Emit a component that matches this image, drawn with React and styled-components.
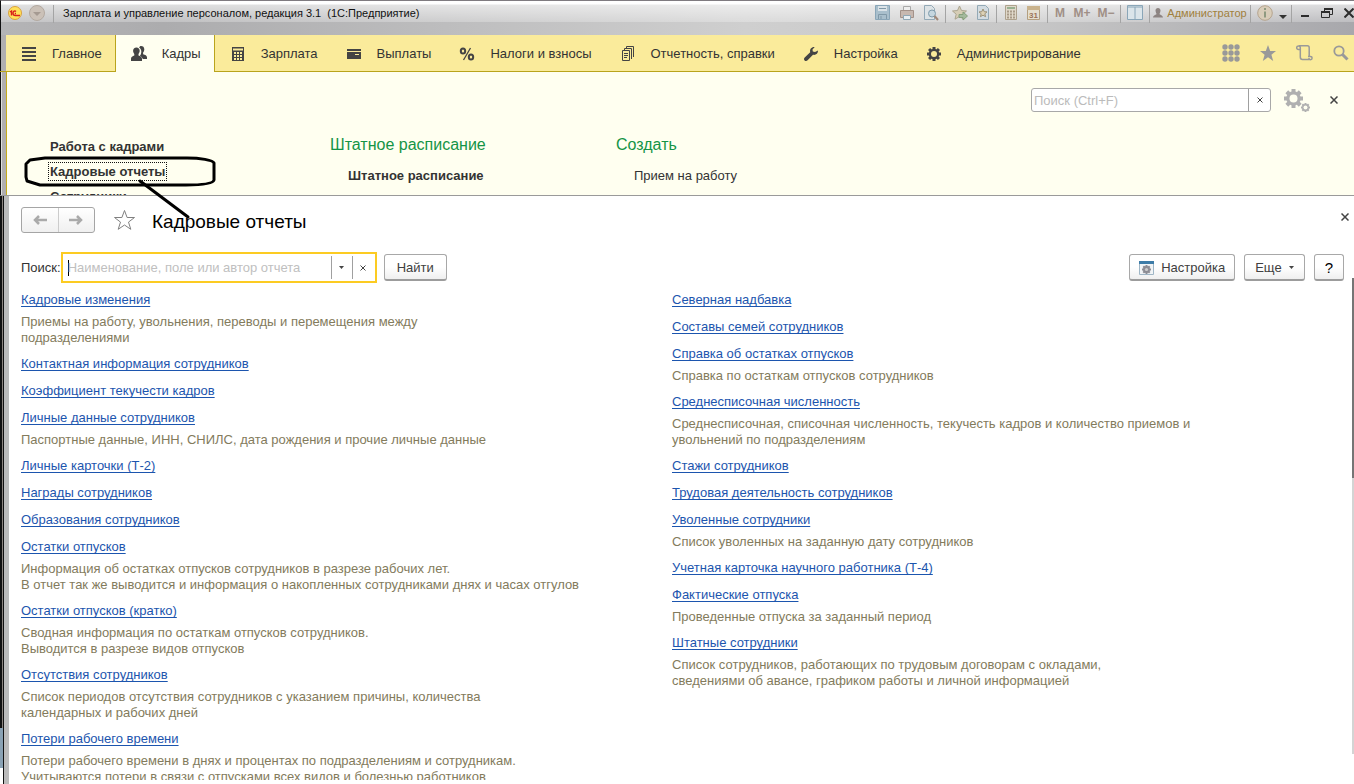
import React from "react";
import styled, { createGlobalStyle, css } from "styled-components";

const GlobalStyle = createGlobalStyle`
  * {
    box-sizing: border-box;
  }

  body {
    margin: 0;
    background: #fff;
    color: #333;
    font-family: "Liberation Sans", Arial, sans-serif;
    font-size: 13px;
    line-height: 16px;
  }

  button,
  input {
    font: inherit;
    color: inherit;
  }
`;

const Window = styled.div`
  position: relative;
  display: flex;
  flex-direction: column;
  height: 100vh;
  overflow: hidden;
`;

/* Title bar */

const TitleBar = styled.header`
  display: flex;
  align-items: flex-start;
  height: 35px;
  padding: 4px 0 0 7px;
  border-top: 1px solid #7f7b80;
  border-left: 1px solid #111;
  background: linear-gradient(
      to bottom,
      #fff 0,
      #fff 3px,
      rgba(255, 255, 255, 0.6) 4px,
      rgba(255, 255, 255, 0.25) 21px,
      transparent 21px
    ),
    linear-gradient(to right, #b4b4b6, #acacae 12%, #cfcfcf 55%, #c8c8c8 75%, #a8a8ac);
`;

const TitleText = styled.h1`
  flex: 1;
  margin: 0;
  padding-left: 7px;
  color: #111;
  font-size: 11px;
  font-weight: normal;
  line-height: 17px;
  white-space: pre;
`;

const TitleButton = styled.button`
  display: flex;
  align-items: center;
  justify-content: ${({ $end }) => ($end ? "flex-end" : "center")};
  flex: none;
  width: ${({ $width }) => $width || 24}px;
  height: 16px;
  padding: 0;
  border: 0;
  background: none;
  color: #a08f86;
  font-size: 12px;
  font-weight: bold;
  white-space: nowrap;
`;

const UserButton = styled(TitleButton)`
  gap: 4px;
  color: #a0803c;
  font-size: 11px;
  font-weight: normal;
`;

const Separator = styled.span`
  flex: none;
  width: 1px;
  height: 18px;
  margin: 0 2px;
  background: #a4a4a4;
`;

/* Sections */

const Sections = styled.nav`
  display: flex;
  height: 37px;
  flex: none;
  padding-left: 6px;
  border-bottom: 1px solid #b9a41c;
  background: linear-gradient(to right, #111 1px, #b0aeb0 1px, #b0aeb0 6px, #faeb9b 6px);
`;

const Section = styled.button`
  display: flex;
  align-items: center;
  gap: 15px;
  padding: 2px 13px 0 15px;
  border: 0;
  background: none;
  font-size: 13px;
  white-space: nowrap;

  ${({ $edge }) =>
    $edge &&
    css`
      border-right: 1px solid #b9a41c;
    `}

  ${({ $active }) =>
    $active &&
    css`
      margin-bottom: -1px;
      padding-top: 1px;
      background: #fffff0;
    `}
`;

const SectionTools = styled.div`
  display: flex;
  align-items: center;
  gap: 19px;
  margin-left: auto;
  padding-right: 5px;
`;

const IconButton = styled.button`
  display: flex;
  align-items: center;
  justify-content: center;
  flex: none;
  min-width: 16px;
  height: 18px;
  margin-left: ${({ $space }) => $space || 0}px;
  padding: 0;
  border: 0;
  background: none;
`;

/* Section menu */

const Menu = styled.section`
  flex: none;
  height: 124px;
  padding-left: 6px;
  overflow: hidden;
  border-bottom: 1px solid #9a9a9a;
  background: linear-gradient(
    to right,
    #111 1px,
    #ddd 1px,
    #ddd 2px,
    #b0aeb0 2px,
    #b0aeb0 6px,
    #c6ab1c 6px,
    #c6ab1c 7px,
    #fffff0 7px
  );
`;

const MenuTools = styled.div`
  display: flex;
  align-items: center;
  justify-content: flex-end;
  padding: 16px 12px 0 0;
`;

const MenuSearch = styled.div`
  display: flex;
  width: 240px;
  height: 24px;
  overflow: hidden;
  border: 1px solid #a8a8a8;
  border-radius: 3px;
  background: #fff;

  input {
    flex: 1;
    min-width: 0;
    padding: 1px 2px 0;
    border: 0;
    outline: 0;
    background: none;
  }

  input::placeholder {
    color: #bbb;
  }

  button {
    width: 22px;
    height: 100%;
    border-left: 1px solid #a0a0a0;
  }
`;

const MenuColumns = styled.div`
  display: grid;
  grid-template-columns: 280px 286px 1fr;
  padding: 22px 0 0 44px;
`;

const MenuColumn = styled.ul`
  margin: 0;
  padding: 0;
  list-style: none;
`;

const MenuHeading = styled.h2`
  margin: 0;
  padding: 1px 0 7px;
  color: #149446;
  font-size: 16px;
  font-weight: normal;
  line-height: 20px;
`;

const MenuItem = styled.li`
  height: 25px;
  padding: ${({ $nested }) => ($nested ? "6px 0 0 18px" : "5px 0 0")};

  a {
    color: #333;
    font-weight: ${({ $bold }) => ($bold ? "bold" : "normal")};
    text-decoration: none;
    outline: ${({ $focused }) => ($focused ? "1px dotted #111" : "none")};
    outline-offset: 1px;
  }
`;

/* Page */

const Page = styled.main`
  display: flex;
  flex: 1;
  flex-direction: column;
  min-height: 0;
  padding: 11px 10px 4px 21px;
  background:
    linear-gradient(#8aa2b4 40px, #fff 40px) left bottom / 3px 56px no-repeat,
    linear-gradient(
      to right,
      #111 2px,
      #8c8580 2px,
      #8c8580 3px,
      #111 3px,
      #111 4px,
      #bbb 4px,
      #bbb 9px,
      #fff 9px
    );
`;

const PageHeader = styled.div`
  display: flex;
  align-items: center;
  height: 26px;
  margin-right: -9px;
`;

const History = styled.div`
  display: flex;
  width: 74px;
  height: 26px;
  border: 1px solid #a5a5a5;
  border-radius: 3px;
  background: linear-gradient(#fff, #f0f0f0);

  button {
    flex: 1;
    height: 100%;
  }

  button + button {
    border-left: 1px solid #ccc;
  }
`;

const PageTitle = styled.h2`
  flex: 1;
  margin: 3px 0 0 16px;
  color: #000;
  font-size: 19px;
  font-weight: normal;
  line-height: 22px;
`;

const CloseButton = styled(IconButton)`
  align-self: flex-start;
  height: 20px;
`;

const Toolbar = styled.div`
  display: flex;
  align-items: center;
  flex: none;
  height: 31px;
  margin-top: 19px;
`;

const SearchBox = styled.div`
  display: flex;
  align-items: center;
  width: 316px;
  height: 31px;
  margin-right: 7px;
  padding-right: 2px;
  border: 2px solid #fccb22;

  input {
    flex: 1;
    min-width: 0;
    padding: 0 5px;
    border: 0;
    outline: 0;
    background: none;
  }

  input::placeholder {
    color: #c0c0c0;
  }

  button {
    width: 21px;
    height: 23px;
    border-left: 1px solid #a0a0a0;
  }
`;

const Caret = styled.span`
  width: 1px;
  height: 16px;
  margin: 0 -6px 0 5px;
  background: #000;
`;

const Button = styled.button`
  display: flex;
  align-items: center;
  justify-content: center;
  gap: 7px;
  height: 27px;
  padding: 1px ${({ $pad }) => $pad || 12}px 0;
  border: 1px solid #a8a8a8;
  border-bottom: 2px solid #9c9c9c;
  border-radius: 3px;
  background: linear-gradient(#fff 50%, #efefef);
  color: ${({ $dark }) => ($dark ? "#000" : "#404040")};
  white-space: nowrap;
`;

const HelpButton = styled(Button)`
  font-size: 15px;
`;

const Actions = styled.div`
  display: flex;
  gap: 9px;
  margin-left: auto;
`;

const Reports = styled.div`
  display: grid;
  grid-template-columns: 1fr 1fr;
  flex: 1;
  min-height: 0;
  padding: 8px 21px 0 0;
  overflow: hidden;
`;

const ReportItem = styled.article`
  padding-bottom: 10px;

  a {
    display: block;
    width: max-content;
    color: #1c55ae;
    line-height: 17px;
    text-decoration: underline;
    text-decoration-skip-ink: none;
    text-underline-offset: 2px;
  }

  p {
    margin: 6px 0 -1px;
    color: #837b5c;
    white-space: pre-line;
  }
`;

/* Lies over the right edge of the page */
const ScrollTrack = styled.div`
  position: absolute;
  top: 278px;
  right: 0;
  bottom: 30px;
  width: 2px;
  background: linear-gradient(#757575 42%, #d4d4d4 42%);
`;

/* Hand-drawn mark over the menu and the page title */
const Mark = styled.svg`
  position: absolute;
  top: 152px;
  left: 20px;
  pointer-events: none;
`;

function Icon({ w = 16, h = 16, children, ...rest }) {
  return (
    <svg
      width={w}
      height={h}
      viewBox={`0 0 ${w} ${h}`}
      fill="none"
      aria-hidden="true"
      {...rest}
    >
      {children}
    </svg>
  );
}

// Cog around (c, c), the hole takes the colour of what lies behind
function Cog({ c, r, hole, tooth, color, back }) {
  return (
    <g>
      {[0, 45, 90, 135].map((angle) => (
        <rect
          key={angle}
          x={c - tooth / 2}
          y={c - r}
          width={tooth}
          height={r * 2}
          fill={color}
          transform={`rotate(${angle} ${c} ${c})`}
        />
      ))}
      <circle cx={c} cy={c} r={r * 0.76} fill={color} />
      <circle cx={c} cy={c} r={hole} fill={back} />
    </g>
  );
}

function Cross({ size = 7, width = 1, color = "#444" }) {
  return (
    <Icon w={size} h={size}>
      <path
        d={`M.5 .5L${size - 0.5} ${size - 0.5}M${size - 0.5} .5L.5 ${size - 0.5}`}
        stroke={color}
        strokeWidth={width}
      />
    </Icon>
  );
}

function Down() {
  return (
    <Icon w={5} h={3}>
      <path d="M0 0h5L2.5 3z" fill="#444" />
    </Icon>
  );
}

const sectionIcons = {
  main: <path d="M1 2h14M1 6h14M1 10h14M1 14h14" stroke="#444" strokeWidth="2" />,
  people: (
    <g fill="#444">
      <path d="M10 0c2 0 3.300 1.200 3.300 3.300 0 1.500-.6 2.600-1.200 3.300v1.600c2 .5 3.900 1.300 3.900 3.100V13h-4.200c-.5-1.700-1.700-2.500-3-3 1-1.200 1.500-2.700 1.500-4.400 0-1.700-.8-3.200-2.200-4C8.600.6 9 0 10 0z" />
      <path d="M5.400 1.500c2 0 3.300 1.300 3.300 3.300 0 1.400-.6 2.500-1.200 3.200v1.500c1.800.6 3.500 1.500 3.500 3.300V15H0v-2.200c0-1.800 1.600-2.700 3.300-3.300V8C2.700 7.300 2.100 6.200 2.100 4.800c0-2 1.300-3.300 3.300-3.300z" />
    </g>
  ),
  calc: (
    <g>
      <path d="M2 1h12v14H2z" fill="#444" />
      <path d="M3 2.500h10v2H3z" fill="#faeb9b" />
      <path d="M4 6h2v2H4zM7 6h2v2H7zM10 6h2v2h-2zM4 9h2v2H4zM7 9h2v2H7zM10 9h2v2h-2zM4 12h2v2H4zM7 12h2v2H7zM10 12h2v2h-2z" fill="#faeb9b" />
    </g>
  ),
  wallet: (
    <g>
      <path d="M1 3h14v2H1zM1 6h14v7H1z" fill="#444" />
      <path d="M9 8.500h4" stroke="#faeb9b" />
    </g>
  ),
  percent: (
    <g stroke="#444" strokeWidth="2">
      <ellipse cx="4" cy="5" rx="2.200" ry="2.600" />
      <ellipse cx="12" cy="11" rx="2.200" ry="2.600" />
      <path d="M11.500 2L4.500 14" strokeWidth="1.300" />
    </g>
  ),
  reports: (
    <g stroke="#444">
      <path d="M2.500 4.500h7v10h-7zM4.500 4V2.500h7V13M6.500 2V.5h7V11M4 7.500h4M4 9.500h4M4 11.500h3" />
    </g>
  ),
  wrench: (
    <path
      d="M15 4.500c.2 3-2.300 5-5 4.300L4.600 14.300c-.9.900-2.200.9-3 .1s-.8-2.100.1-3L7.200 6.200C6.500 3.300 8.500.8 11.700 1.100L9.500 3.600l.3 2 2.200.5z"
      fill="#444"
    />
  ),
  cog: <Cog c={8} r={7} hole={3} tooth={3} color="#444" back="#faeb9b" />,
};

const sections = [
  { name: "Главное", icon: "main", edge: true },
  { name: "Кадры", icon: "people", edge: true, active: true },
  { name: "Зарплата", icon: "calc" },
  { name: "Выплаты", icon: "wallet" },
  { name: "Налоги и взносы", icon: "percent" },
  { name: "Отчетность, справки", icon: "reports" },
  { name: "Настройка", icon: "wrench" },
  { name: "Администрирование", icon: "cog" },
];

const leftReports = [
  {
    name: "Кадровые изменения",
    text: "Приемы на работу, увольнения, переводы и перемещения между\nподразделениями",
  },
  { name: "Контактная информация сотрудников" },
  { name: "Коэффициент текучести кадров" },
  {
    name: "Личные данные сотрудников",
    text: "Паспортные данные, ИНН, СНИЛС, дата рождения и прочие личные данные",
  },
  { name: "Личные карточки (Т-2)" },
  { name: "Награды сотрудников" },
  { name: "Образования сотрудников" },
  {
    name: "Остатки отпусков",
    text: "Информация об остатках отпусков сотрудников в разрезе рабочих лет.\nВ отчет так же выводится и информация о накопленных сотрудниками днях и часах отгулов",
  },
  {
    name: "Остатки отпусков (кратко)",
    text: "Сводная информация по остаткам отпусков сотрудников.\nВыводится в разрезе видов отпусков",
  },
  {
    name: "Отсутствия сотрудников",
    text: "Список периодов отсутствия сотрудников с указанием причины, количества\nкалендарных и рабочих дней",
  },
  {
    name: "Потери рабочего времени",
    text: "Потери рабочего времени в днях и процентах по подразделениям и сотрудникам.\nУчитываются потери в связи с отпусками всех видов и болезнью работников",
  },
];

const rightReports = [
  { name: "Северная надбавка" },
  { name: "Составы семей сотрудников" },
  {
    name: "Справка об остатках отпусков",
    text: "Справка по остаткам отпусков сотрудников",
  },
  {
    name: "Среднесписочная численность",
    text: "Среднесписочная, списочная численность, текучесть кадров и количество приемов и\nувольнений по подразделениям",
  },
  { name: "Стажи сотрудников" },
  { name: "Трудовая деятельность сотрудников" },
  {
    name: "Уволенные сотрудники",
    text: "Список уволенных на заданную дату сотрудников",
  },
  { name: "Учетная карточка научного работника (Т-4)" },
  {
    name: "Фактические отпуска",
    text: "Проведенные отпуска за заданный период",
  },
  {
    name: "Штатные сотрудники",
    text: "Список сотрудников, работающих по трудовым договорам с окладами,\nсведениями об авансе, графиком работы и личной информацией",
  },
];

function WindowTitle() {
  return (
    <TitleBar>
      <TitleButton $width={14} aria-label="1С">
        <Icon w={14} h={14}>
          <circle cx="7" cy="7" r="6.500" fill="#ffe15a" stroke="#d8a040" />
          <path d="M2 6l1.500-1v4.500M8 5.500C6.800 4.400 5 5.300 5 7.200c0 1.500 1 2.300 2.500 2.300H12M8 7.500H6.800" stroke="#d8201c" strokeWidth="1.400" />
        </Icon>
      </TitleButton>
      <TitleButton $width={29} aria-label="Главное меню">
        <Icon>
          <circle cx="8" cy="8" r="7.500" fill="#cbc1b8" stroke="#b3a9a0" />
          <path d="M4 7h8l-4 4z" fill="#a59a92" />
        </Icon>
      </TitleButton>
      <Separator />
      <TitleText>{"Зарплата и управление персоналом, редакция 3.1  (1С:Предприятие)"}</TitleText>

      <TitleButton aria-label="Сохранить">
        <Icon>
          <path d="M.5.5h14v14H.5z" fill="#a9bfcc" stroke="#8aa6b8" />
          <path d="M3 1h9v5H3z" fill="#dbe3e8" />
          <path d="M4 3.500h7M3.500 14V9.500h8V14M6 11v3" stroke="#8199a8" />
        </Icon>
      </TitleButton>
      <TitleButton aria-label="Печать">
        <Icon>
          <path d="M4.500 6V1.500h7V6" fill="#eee" stroke="#a9a9a9" />
          <path d="M1.500 5.500h13v7h-13z" fill="#c7b8b0" stroke="#a3928a" />
          <path d="M4.500 10.500h7v4h-7z" fill="#e8eef2" stroke="#8fa7b5" />
        </Icon>
      </TitleButton>
      <TitleButton aria-label="Просмотр">
        <Icon>
          <path d="M1.500.5h7l3 3v11h-10z" fill="#dde3e6" stroke="#93a9b6" />
          <circle cx="9" cy="8.500" r="3.500" fill="#c5d6df" stroke="#7f9bab" />
          <path d="M11.500 11l3.500 4" stroke="#a08878" strokeWidth="2" />
        </Icon>
      </TitleButton>
      <Separator />
      <TitleButton $width={23} aria-label="В избранное">
        <Icon>
          <path d="M7.500 1l2 4.500 5 .5-3.800 3.200 1.200 5-4.400-2.700L3 14.200l1.200-5L.5 6l5-.5z" fill="#d6cdb5" stroke="#aca58f" />
          <path d="M7 9.500h4V7l4.500 4-4.500 4v-2.500H7z" fill="#a4b99c" stroke="#86a17c" />
        </Icon>
      </TitleButton>
      <TitleButton $width={23} aria-label="Избранное">
        <Icon>
          <path d="M2.500.5h8l3 3v11h-11z" fill="#d3dce2" stroke="#93a9b6" />
          <path d="M8 4l1.200 2.700 2.800.2-2.200 1.900.8 2.900L8 10.200l-2.600 1.500.8-2.900L4 6.900l2.800-.2z" fill="#ddd1b5" stroke="#9c9278" />
        </Icon>
      </TitleButton>
      <Separator />
      <TitleButton $width={23} aria-label="Калькулятор">
        <Icon>
          <path d="M2.500.5h11v14h-11z" fill="#e0d9cb" stroke="#aea28e" />
          <path d="M4 2h8v2H4z" fill="#98b090" />
          <path d="M4 6.500h8M4 9.500h8M4 12.500h8" stroke="#a89a88" strokeWidth="2" strokeDasharray="2 1" />
        </Icon>
      </TitleButton>
      <TitleButton $width={23} aria-label="Календарь">
        <Icon>
          <path d="M1.500 2.500h12v12h-12z" fill="#e5dfcf" stroke="#b39f80" />
          <path d="M1 1h13v4H1z" fill="#c9b28c" />
          <text x="3" y="13" fontSize="8" fill="#9a7358" fontWeight="bold">31</text>
        </Icon>
      </TitleButton>
      <Separator />
      <TitleButton $width={20}>M</TitleButton>
      <TitleButton $width={24}>M+</TitleButton>
      <TitleButton $width={24}>M−</TitleButton>
      <Separator />
      <TitleButton aria-label="Окна">
        <Icon>
          <path d="M.5.500h15v14H.5z" fill="#dbe5ea" stroke="#8aa6b8" />
          <path d="M0 2h16M8 2v12" stroke="#8aa6b8" />
        </Icon>
      </TitleButton>
      <Separator />
      <UserButton $width={96}>
        <Icon w={10} h={10}>
          <path d="M5 0c1.500 0 2.500 1 2.500 2.500C7.500 4 6.500 5.500 6.500 6c0 .7 3 .8 3.500 3.500H0C.5 6.800 3.500 6.700 3.500 6c0-.5-1-2-1-3.500C2.500 1 3.500 0 5 0z" fill="#8d8482" />
        </Icon>
        Администратор
      </UserButton>
      <Separator />
      <TitleButton aria-label="О программе">
        <Icon>
          <circle cx="8" cy="8" r="7.300" fill="#d9cdb9" stroke="#b5a48e" />
          <path d="M8 3v2M8 6.500v6" stroke="#8f9a80" strokeWidth="2" />
        </Icon>
      </TitleButton>
      <TitleButton $width={12} aria-label="Сервис">
        <Icon w={8} h={12}>
          <path d="M0 8h8l-4 4z" fill="#333" />
        </Icon>
      </TitleButton>
      <Separator />
      <TitleButton $width={22} aria-label="Свернуть">
        <Icon w={8} h={8}>
          <path d="M0 7h8" stroke="#2d2d2d" strokeWidth="2" />
        </Icon>
      </TitleButton>
      <TitleButton $width={22} aria-label="Развернуть">
        <Icon w={12} h={10}>
          <path d="M3.500 3V.5h8v6H9" stroke="#2d2d2d" />
          <path d="M3 1h9M0 4h9" stroke="#2d2d2d" strokeWidth="2" />
          <path d="M.5 3.500h8v6h-8z" stroke="#2d2d2d" />
        </Icon>
      </TitleButton>
      <TitleButton $width={16} $end aria-label="Закрыть">
        <Cross size={10} width={2} color="#2d2d2d" />
      </TitleButton>
    </TitleBar>
  );
}

function ReportList({ items }) {
  return (
    <div>
      {items.map(({ name, text }) => (
        <ReportItem key={name}>
          <a href="#report">{name}</a>
          {text && <p>{text}</p>}
        </ReportItem>
      ))}
    </div>
  );
}

function App() {
  return (
    <Window>
      <GlobalStyle />
      <WindowTitle />

      <Sections>
        {sections.map(({ name, icon, edge, active }) => (
          <Section key={name} $edge={edge} $active={active}>
            <Icon>{sectionIcons[icon]}</Icon>
            {name}
          </Section>
        ))}
        <SectionTools>
          <IconButton aria-label="Все функции">
            <Icon w={18} h={18}>
              {[3, 9, 15].map((y) =>
                [3, 9, 15].map((x) => (
                  <circle key={`${x}-${y}`} cx={x} cy={y} r="2.700" fill="#999" />
                ))
              )}
            </Icon>
          </IconButton>
          <IconButton aria-label="Избранное">
            <Icon w={18} h={18}>
              <path d="M9 1l2.200 6H17l-4.600 3.700L14.200 17 9 13.200 3.800 17l1.800-6.300L1 7h5.800z" fill="#999" />
            </Icon>
          </IconButton>
          <IconButton aria-label="История">
            <Icon w={18} h={18}>
              <path d="M4 5.500H2.500a1.800 1.800 0 1 1 1.800-1.800V13c0 1.800 1 2.500 2.200 2.500H14M2.500 1.800h9c1.200 0 1.700.8 1.700 2V12M12 12.500h2.500a1.600 1.600 0 1 1-1.600 1.600" stroke="#999" strokeWidth="1.500" />
            </Icon>
          </IconButton>
          <IconButton aria-label="Поиск">
            <Icon>
              <circle cx="6" cy="6" r="4.700" stroke="#999" strokeWidth="1.800" />
              <path d="M9.500 9.500l5 5" stroke="#999" strokeWidth="3" />
            </Icon>
          </IconButton>
        </SectionTools>
      </Sections>

      <Menu>
        <MenuTools>
          <MenuSearch>
            <input type="search" placeholder="Поиск (Ctrl+F)" aria-label="Поиск (Ctrl+F)" />
            <IconButton aria-label="Очистить">
              <Cross size={6} />
            </IconButton>
          </MenuSearch>
          <IconButton $space={13} aria-label="Настройка меню">
            <Icon w={26} h={23}>
              <Cog c={9.5} r={9.5} hole={4} tooth={4} color="#b0b0b0" back="#fffff0" />
              <g transform="translate(17 14)">
                <Cog c={4.5} r={4.5} hole={2} tooth={2} color="#b0b0b0" back="#fffff0" />
              </g>
            </Icon>
          </IconButton>
          <IconButton $space={16} aria-label="Закрыть меню">
            <Cross size={8} width={1.5} />
          </IconButton>
        </MenuTools>
        <MenuColumns>
          <MenuColumn>
            <MenuItem $bold>
              <a href="#work">Работа с кадрами</a>
            </MenuItem>
            <MenuItem $bold $focused>
              <a href="#reports">Кадровые отчеты</a>
            </MenuItem>
            <MenuItem $bold>
              <a href="#staff">Сотрудники</a>
            </MenuItem>
          </MenuColumn>
          <div>
            <MenuHeading>Штатное расписание</MenuHeading>
            <MenuColumn>
              <MenuItem $bold $nested>
                <a href="#schedule">Штатное расписание</a>
              </MenuItem>
            </MenuColumn>
          </div>
          <div>
            <MenuHeading>Создать</MenuHeading>
            <MenuColumn>
              <MenuItem $nested>
                <a href="#hire">Прием на работу</a>
              </MenuItem>
            </MenuColumn>
          </div>
        </MenuColumns>
      </Menu>

      <Page>
        <PageHeader>
          <History>
            <IconButton aria-label="Назад">
              <Icon w={14} h={10}>
                <path d="M2 5h12M6 1L2 5l4 4" stroke="#aaa" strokeWidth="2.500" />
              </Icon>
            </IconButton>
            <IconButton aria-label="Вперед">
              <Icon w={14} h={10}>
                <path d="M0 5h12M8 1l4 4-4 4" stroke="#aaa" strokeWidth="2.500" />
              </Icon>
            </IconButton>
          </History>
          <IconButton $space={18} aria-label="В избранное">
            <Icon w={23} h={22}>
              <path d="M11.500 1.500l2.600 7h7.400l-6 4.600 2.300 7.200-6.300-4.300-6.300 4.300 2.300-7.200-6-4.600h7.400z" stroke="#808080" />
            </Icon>
          </IconButton>
          <PageTitle>Кадровые отчеты</PageTitle>
          <CloseButton aria-label="Закрыть">
            <Cross size={8} width={1.5} />
          </CloseButton>
        </PageHeader>

        <Toolbar>
          <label htmlFor="report-search">Поиск:</label>
          <SearchBox>
            <Caret />
            <input id="report-search" placeholder="Наименование, поле или автор отчета" />
            <IconButton aria-label="Выбрать">
              <Down />
            </IconButton>
            <IconButton aria-label="Очистить">
              <Cross size={6} />
            </IconButton>
          </SearchBox>
          <Button>Найти</Button>
          <Actions>
            <Button $pad={9}>
              <Icon w={15} h={14}>
                <path d="M.5.5h14v13H.5z" fill="#f1f4f6" stroke="#9fb6c6" />
                <path d="M0 0h15v3H0z" fill="#3d7ca8" />
                <g transform="translate(3 4)">
                  <Cog c={4.5} r={4.5} hole={1.6} tooth={2} color="#8c8c94" back="#ccc" />
                </g>
              </Icon>
              Настройка
            </Button>
            <Button $pad={10}>
              Еще
              <Down />
            </Button>
            <HelpButton $pad={10} $dark>
              ?
            </HelpButton>
          </Actions>
        </Toolbar>

        <Reports>
          <ReportList items={leftReports} />
          <ReportList items={rightReports} />
        </Reports>
      </Page>

      <ScrollTrack />
      <Mark width="200" height="68" viewBox="0 0 200 68" fill="none" aria-hidden="true">
        <path
          d="M25 6h142c13 0 26 2 27 5v17c-1 4-13 5-28 5H46L20 33 7 29l-1-4V12l4-4z"
          stroke="#000"
          strokeWidth="3"
          strokeLinejoin="round"
        />
        <path d="M120 29l48 36" stroke="#000" strokeWidth="3" strokeLinecap="round" />
      </Mark>
    </Window>
  );
}

export default App;
